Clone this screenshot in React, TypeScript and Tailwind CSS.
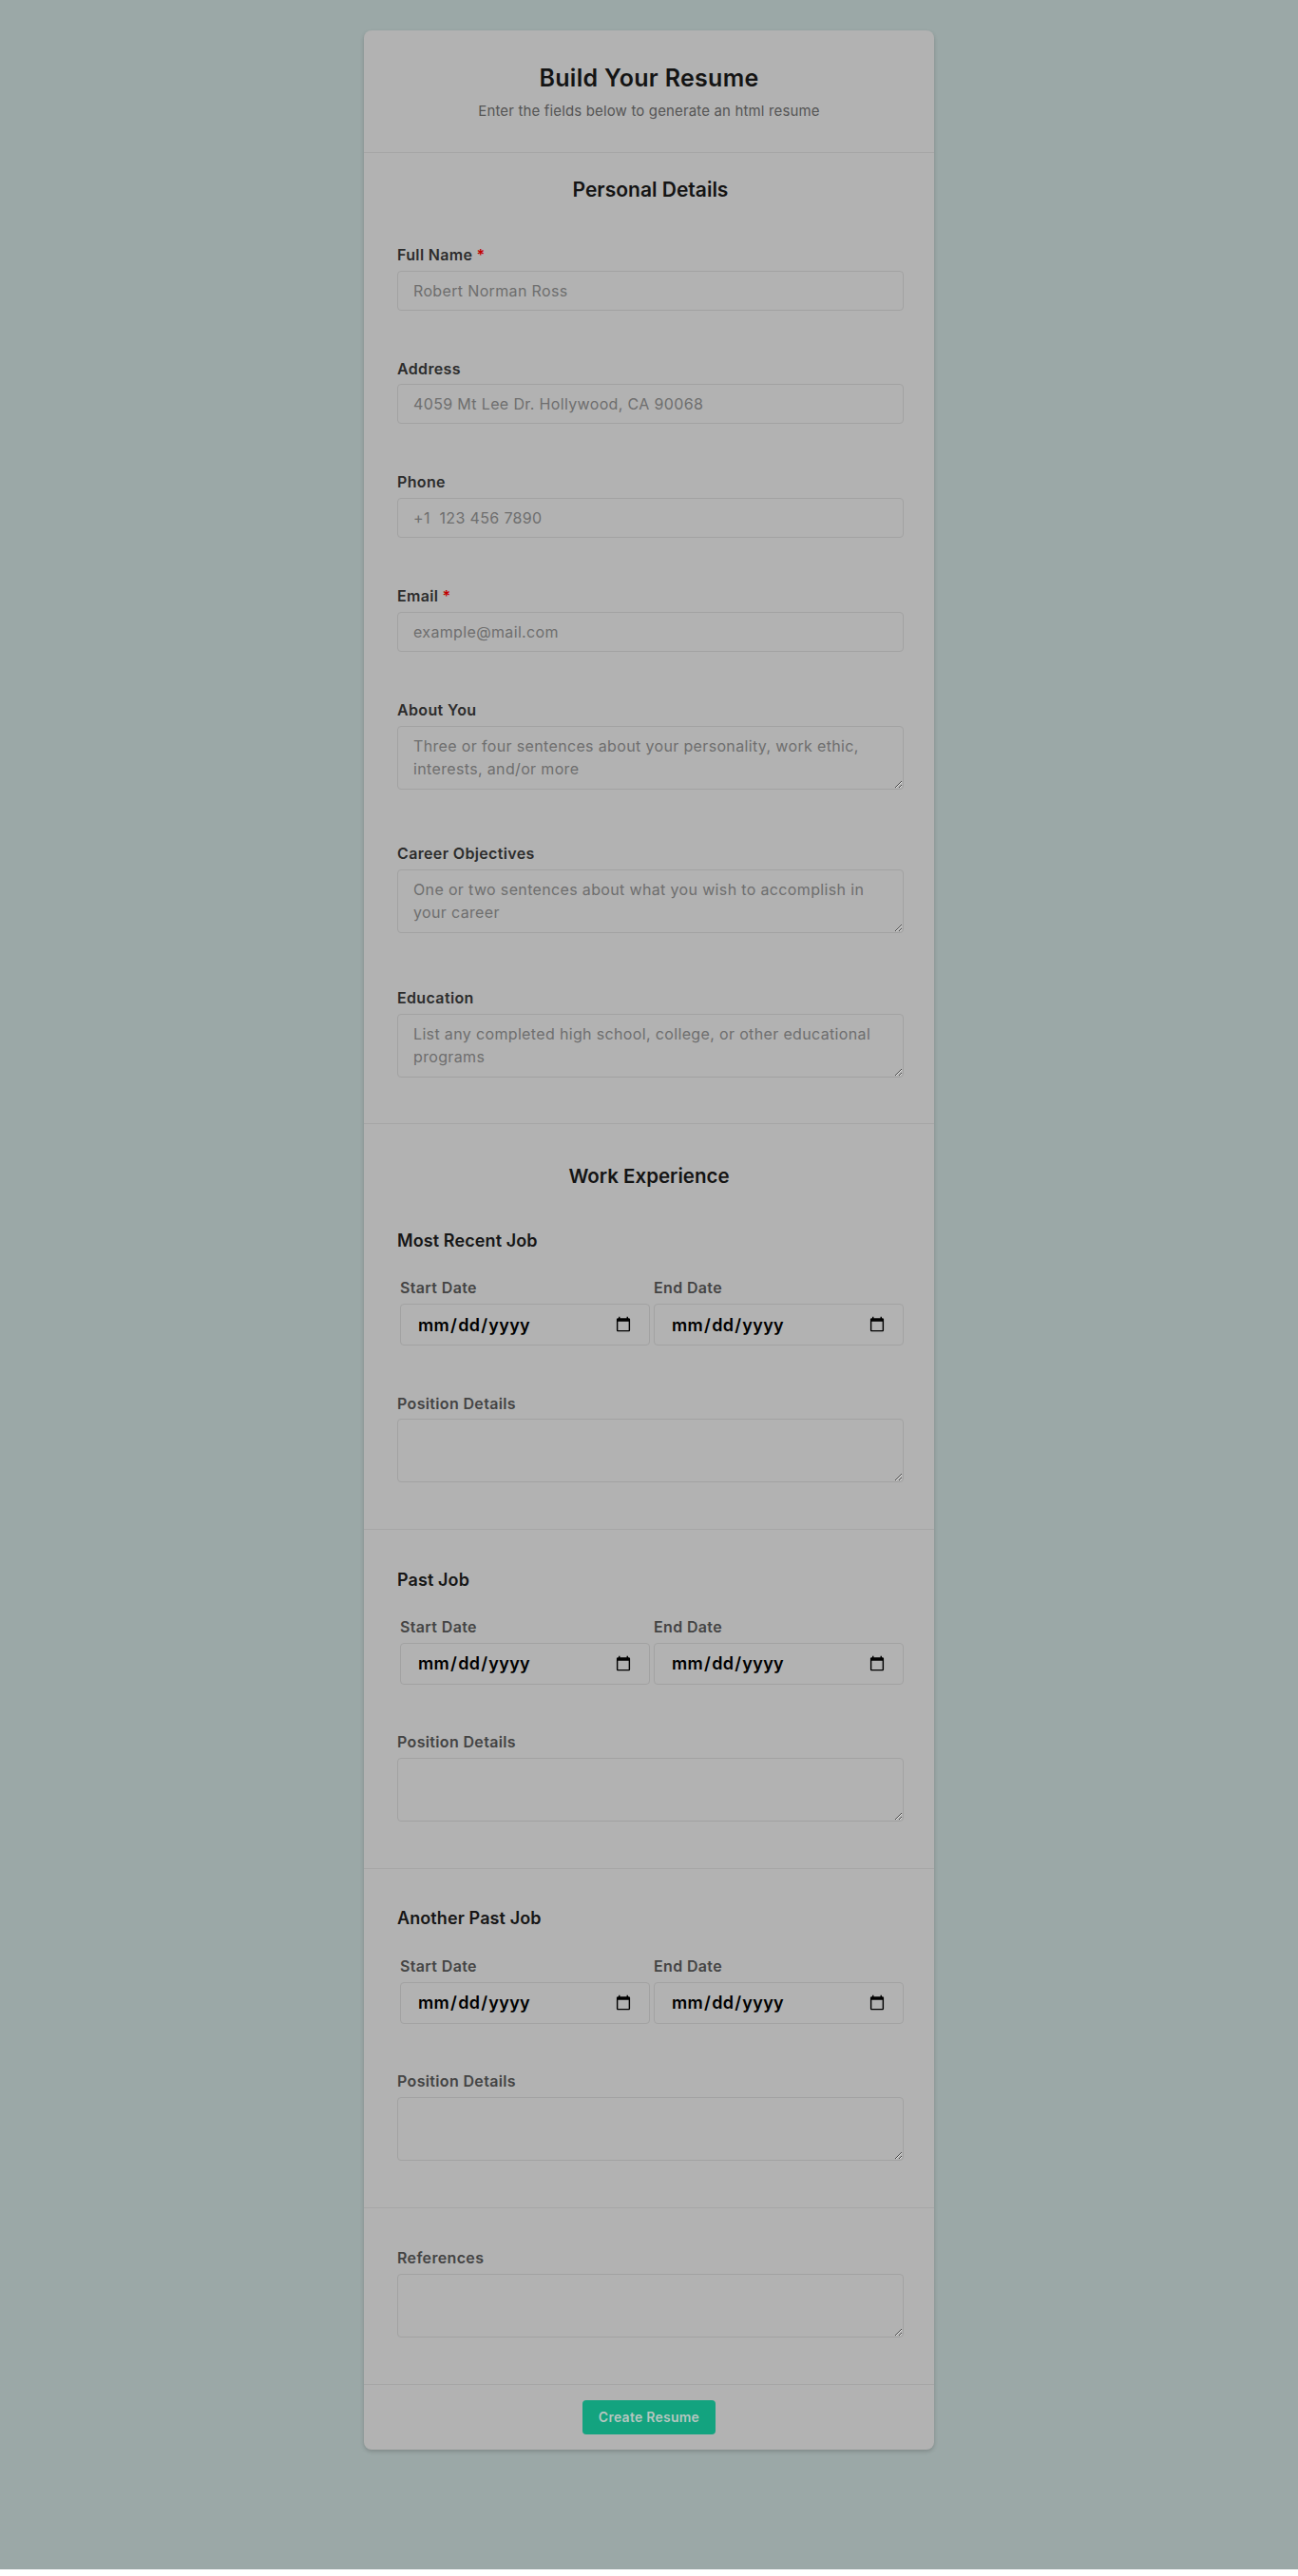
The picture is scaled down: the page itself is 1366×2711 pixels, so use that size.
type Field = { label: string; placeholder?: string; required?: boolean; multiline?: boolean }

const PERSONAL: Field[] = [
  { label: 'Full Name', placeholder: 'Robert Norman Ross', required: true },
  { label: 'Address', placeholder: '4059 Mt Lee Dr. Hollywood, CA 90068' },
  { label: 'Phone', placeholder: '+1  123 456 7890' },
  { label: 'Email', placeholder: 'example@mail.com', required: true },
  {
    label: 'About You',
    placeholder: 'Three or four sentences about your personality, work ethic, interests, and/or more',
    multiline: true,
  },
  {
    label: 'Career Objectives',
    placeholder: 'One or two sentences about what you wish to accomplish in your career',
    multiline: true,
  },
  {
    label: 'Education',
    placeholder: 'List any completed high school, college, or other educational programs',
    multiline: true,
  },
]

const JOBS = ['Most Recent Job', 'Past Job', 'Another Past Job']

const inputBase =
  'w-full rounded-[4px] border border-[#a2a2a2] bg-transparent px-4 py-2 text-[16px] leading-[24px] tracking-[0.35px] text-[#222] placeholder:text-[#6e6e6e] outline-none'

function Label({ text, required, tone }: { text: string; required?: boolean; tone?: 'dark' | 'soft' }) {
  return (
    <label
      className={
        'block h-[24px] mb-[4.75px] text-[16px] leading-[24px] tracking-[0.35px] font-semibold ' +
        (tone === 'soft' ? 'text-[#444]' : 'text-[#2c2c2c]')
      }
    >
      {text}
      {required && <span className="ml-1 text-[#c20000]">*</span>}
    </label>
  )
}

function TextArea({ placeholder }: { placeholder?: string }) {
  return <textarea rows={2} placeholder={placeholder} className={inputBase + ' block h-[67px] mb-[6.75px] resize-y'} />
}

function PersonalField({ field }: { field: Field }) {
  return (
    <div>
      <Label text={field.label} required={field.required} />
      {field.multiline ? (
        <TextArea placeholder={field.placeholder} />
      ) : (
        <input type="text" placeholder={field.placeholder} className={inputBase + ' block h-[42px]'} />
      )}
    </div>
  )
}

function DateField({ label }: { label: string }) {
  return (
    <div className="flex-1 min-w-0">
      <Label text={label} tone="soft" />
      <input
        type="date"
        className="block w-full h-[44px] rounded-[4px] border border-[#a2a2a2] bg-transparent pl-[17px] pr-4 text-[18px] tracking-[0.3px] font-semibold text-black outline-none"
      />
    </div>
  )
}

function Job({ title, first }: { title: string; first: boolean }) {
  return (
    <div className={'pt-[39.5px] pb-[42px] pl-[35px] pr-[32px] ' + (first ? '' : 'border-t border-[#a6a6a6]')}>
      <h3 className="h-[26px] text-[18px] leading-[26px] tracking-[0.1px] font-semibold text-[#161616] mb-[24.5px]">
        {title}
      </h3>
      <div className="flex gap-[4px] pl-[3px]">
        <DateField label="Start Date" />
        <DateField label="End Date" />
      </div>
      <div className="mt-[48.5px]">
        <Label text="Position Details" tone="soft" />
        <TextArea />
      </div>
    </div>
  )
}

export default function App() {
  return (
    <div className="bg-[#9ba8a7] pt-[32px] pb-[126px] font-['Inter','Noto_Sans',sans-serif]">
      <div className="w-[600px] mx-auto rounded-[8px] bg-[#b2b2b2] shadow-[0_2px_4px_rgba(0,0,0,0.18)]">
        <header className="pt-[33px] pb-[33px] text-center border-b border-[#a6a6a6]">
          <h1 className="text-[25px] leading-[34px] tracking-[0.3px] font-semibold text-[#141414]">
            Build Your Resume
          </h1>
          <p className="mt-[8px] text-[15px] leading-[20px] tracking-[0.15px] text-[#555]">
            Enter the fields below to generate an html resume
          </p>
        </header>

        <section className="pt-[24px] pb-[42px] pl-[35px] pr-[32px] border-b border-[#a6a6a6]">
          <h2 className="text-center text-[21px] leading-[30px] font-semibold text-[#141414] mb-[40.75px]">
            Personal Details
          </h2>
          <div className="flex flex-col gap-[49px]">
            {PERSONAL.map((f) => (
              <PersonalField key={f.label} field={f} />
            ))}
          </div>
        </section>

        <section className="border-b border-[#a6a6a6]">
          <h2 className="pt-[40px] text-center text-[20.5px] leading-[30px] font-semibold text-[#141414]">
            Work Experience
          </h2>
          {JOBS.map((j, i) => (
            <Job key={j} title={j} first={i === 0} />
          ))}
        </section>

        <section className="pt-[40.5px] pb-[42px] pl-[35px] pr-[32px] border-b border-[#a6a6a6]">
          <Label text="References" tone="soft" />
          <TextArea />
        </section>

        <div className="flex justify-center pt-[16px] pb-[16px]">
          <button className="w-[140px] h-[36px] rounded-[4px] bg-[#13a37f] text-[14px] tracking-[0.25px] font-semibold text-[#b7c6c0]">
            Create Resume
          </button>
        </div>
      </div>
    </div>
  )
}
